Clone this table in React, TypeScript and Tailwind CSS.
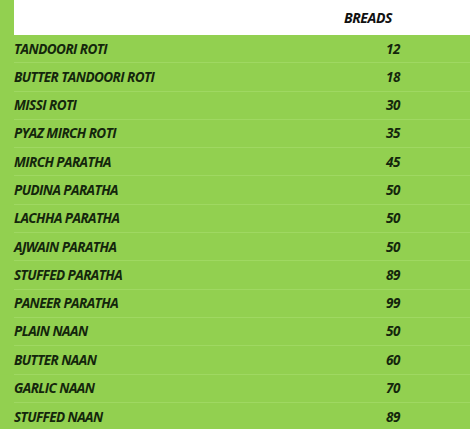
const items: [string, string][] = [
  ["TANDOORI ROTI", "12"],
  ["BUTTER TANDOORI ROTI", "18"],
  ["MISSI ROTI", "30"],
  ["PYAZ MIRCH ROTI", "35"],
  ["MIRCH PARATHA", "45"],
  ["PUDINA PARATHA", "50"],
  ["LACHHA PARATHA", "50"],
  ["AJWAIN PARATHA", "50"],
  ["STUFFED PARATHA", "89"],
  ["PANEER PARATHA", "99"],
  ["PLAIN NAAN", "50"],
  ["BUTTER NAAN", "60"],
  ["GARLIC NAAN", "70"],
  ["STUFFED NAAN", "89"],
];

export default function App() {
  return (
    <div
      className="w-[470px] h-[429px] bg-[#92d050] overflow-hidden flex flex-col"
      style={{ fontFamily: '"Open Sans", "Liberation Sans", sans-serif' }}
    >
      <div className="ml-[14px] h-[35px] bg-white flex items-center shrink-0">
        <div className="w-[378px] text-right text-[14px] font-bold italic text-[#111] tracking-[-0.4px]">
          BREADS
        </div>
      </div>
      <div className="flex flex-col">
        {items.map(([name, price], i) => (
          <div
            key={i}
            className={
              "ml-[14px] h-[28.3px] flex items-center text-[13.5px] font-bold italic text-[#14260c] tracking-[-0.55px] " +
              (i < items.length - 1 ? "border-b border-[#9fd862]" : "")
            }
          >
            <div className="flex-1">{name}</div>
            <div className="w-[60px] text-center">{price}</div>
            <div className="w-[47px]" />
          </div>
        ))}
      </div>
    </div>
  );
}
